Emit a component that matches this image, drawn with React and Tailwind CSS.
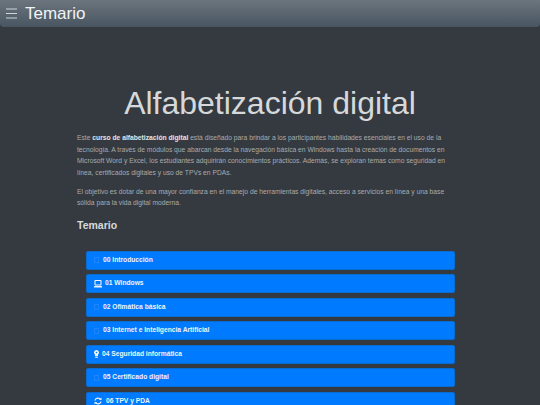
import React from 'react';

const Placeholder = () => (
  <span className="w-[5px] h-[6px] border border-[#2a8cff] opacity-70 mr-[4px]" />
);

const LaptopIcon = () => (
  <svg width="8" height="8" viewBox="0 0 8 8" className="mr-[3px]">
    <rect x="1" y="0.5" width="6" height="4.5" rx="0.5" fill="none" stroke="currentColor" strokeWidth="1.1" />
    <rect x="0" y="6" width="8" height="1.6" rx="0.4" fill="currentColor" />
  </svg>
);

const BulbIcon = () => (
  <svg width="5" height="8" viewBox="0 0 5 8" className="mr-[3px]">
    <path d="M2.5 0a2.5 2.5 0 0 1 1.5 4.5V6H1V4.5A2.5 2.5 0 0 1 2.5 0z" fill="currentColor" />
    <circle cx="2.5" cy="2.5" r="0.8" fill="#007bff" />
    <rect x="1.2" y="6.6" width="2.6" height="1.2" fill="currentColor" />
  </svg>
);

const SyncIcon = () => (
  <svg width="8" height="8" viewBox="0 0 8 8" className="mr-[4px]" fill="none" stroke="currentColor" strokeWidth="1.3">
    <path d="M1 3.5A3 3 0 0 1 6.5 2.5M7 4.5A3 3 0 0 1 1.5 5.5" />
    <path d="M5 3h2.5V0.6z" fill="currentColor" stroke="none" />
    <path d="M3 5H0.5v2.4z" fill="currentColor" stroke="none" />
  </svg>
);

const items = [
  { label: '00 Introducción', icon: <Placeholder /> },
  { label: '01 Windows', icon: <LaptopIcon /> },
  { label: '02 Ofimática básica', icon: <Placeholder /> },
  { label: '03 Internet e Inteligencia Artificial', icon: <Placeholder /> },
  { label: '04 Seguridad informática', icon: <BulbIcon /> },
  { label: '05 Certificado digital', icon: <Placeholder /> },
  { label: '06 TPV y PDA', icon: <SyncIcon /> },
];

export default function App() {
  return (
    <div className="h-[405px] overflow-hidden bg-[#343a40] font-['Liberation_Sans',sans-serif]">
      <nav className="h-[27px] flex items-center px-[6px] rounded-b-[4px] bg-gradient-to-b from-[#6c757d] to-[#485561]">
        <svg width="11" height="11" viewBox="0 0 11 11" className="text-[#ced4da]">
          <path d="M0 1h11M0 5.5h11M0 10h11" stroke="currentColor" strokeWidth="1" />
        </svg>
        <span className="ml-[8px] text-[17px] text-[#f1f3f5]">Temario</span>
      </nav>

      <main className="px-[77px]">
        <h1 className="mt-[55px] text-center text-[32px] leading-[43px] text-[#d6d8da]">Alfabetización digital</h1>
        <p className="mt-[7px] text-[6.72px] leading-[11.5px] text-[#a8abae]">
          Este <strong className="text-[#e4e5e6]">curso de alfabetización digital</strong> está diseñado para brindar a los participantes habilidades esenciales en el uso de la tecnología. A través de módulos que abarcan desde la navegación básica en Windows hasta la creación de documentos en Microsoft Word y Excel, los estudiantes adquirirán conocimientos prácticos. Además, se exploran temas como seguridad en línea, certificados digitales y uso de TPVs en PDAs.
        </p>
        <p className="mt-[7.5px] text-[6.72px] leading-[11.5px] text-[#a8abae]">
          El objetivo es dotar de una mayor confianza en el manejo de herramientas digitales, acceso a servicios en línea y una base sólida para la vida digital moderna.
        </p>
        <h2 className="mt-[8px] text-[10.5px] leading-[16px] font-bold text-[#d8dadc]">Temario</h2>

        <ul className="mt-[18px] ml-[9px] w-[369px] flex flex-col gap-[4.5px]">
          {items.map((item) => (
            <li key={item.label} className="h-[19px] flex items-center pl-[7px] rounded-[2px] bg-[#007bff] border border-[#0a6cd0] text-[6.7px] font-bold text-[#f1f3f5]">
              {item.icon}
              {item.label}
            </li>
          ))}
        </ul>
      </main>
    </div>
  );
}
